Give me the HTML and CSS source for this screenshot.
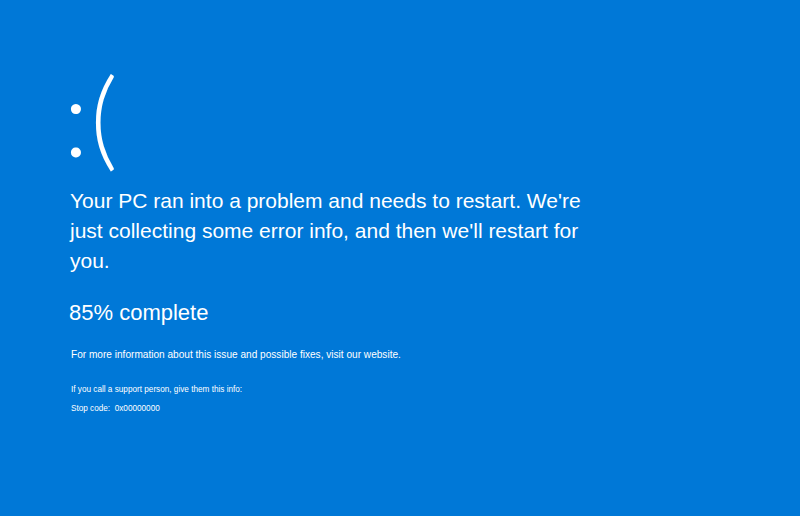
FILE: index.html
```
<!DOCTYPE html>
<html>
<head>
  <title>Your PC ran into a problem</title>
  <link rel="stylesheet" href="styles.css">
</head>
<body>
  <div class="screen">
    <div class="face">:(</div>
    <p class="message">Your PC ran into a problem and needs to restart. We're just collecting some error info, and then we'll restart for you.</p>
    <p class="progress">85% complete</p>
    <p class="info">For more information about this issue and possible fixes, visit our website.</p>
    <p class="support">If you call a support person, give them this info:</p>
    <p class="stop">Stop code:&nbsp; 0x00000000</p>
  </div>
</body>
</html>
```

FILE: styles.css
```
html, body {
  margin: 0;
  padding: 0;
  height: 100%;
  overflow: hidden;
}
body {
  background-color: #0078d7;
  color: #fff;
  font-family: "Liberation Sans", Arial, sans-serif;
}
.screen {
  padding: 50px 0 0 68px;
}
.screen p {
  margin: 0;
  padding-left: 2px;
}
.face {
  font-family: Lato, sans-serif;
  font-weight: 300;
  font-size: 108px;
  line-height: 130px;
  letter-spacing: 1px;
  margin-left: -5px;
}
.message {
  width: 530px;
  font-size: 21px;
  line-height: 30px;
  margin-top: 6px !important;
}
.progress {
  font-size: 22px;
  line-height: 30px;
  margin-top: 22px !important;
  padding-left: 1px !important;
}
.info {
  font-size: 10.1px;
  line-height: 14px;
  margin-top: 20px !important;
  padding-left: 3px !important;
}
.support {
  font-size: 8.2px;
  line-height: 12px;
  margin-top: 22px !important;
  padding-left: 3px !important;
}
.stop {
  font-size: 8.2px;
  line-height: 12px;
  margin-top: 7px !important;
  padding-left: 3px !important;
}
```
